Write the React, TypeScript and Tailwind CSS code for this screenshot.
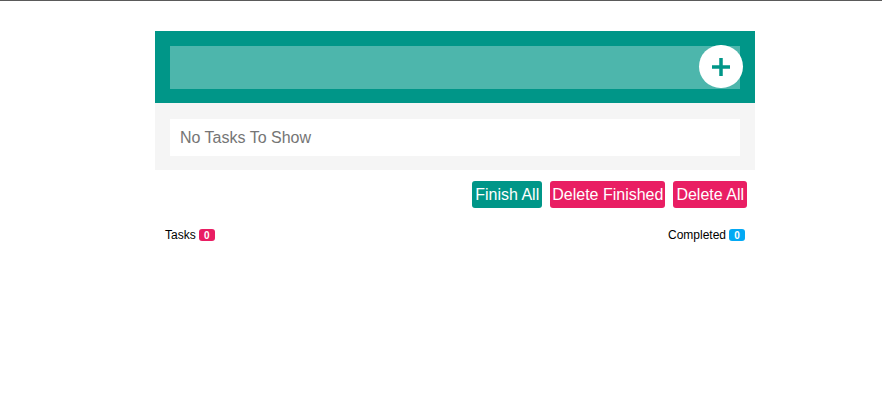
export default function App() {
  return (
    <div className="min-h-screen bg-white border-t border-[#5a5a5a] font-['Liberation_Sans',Arial,sans-serif]">
      <div className="w-[600px] ml-[155px] mt-[30px]">
        {/* header */}
        <div className="bg-[#009688] pl-[15px] pr-[15px] pt-[15px] pb-[14px] flex items-center">
          <div className="flex-1 h-[43px] bg-[#4db6ac] relative">
            <button className="absolute right-[-3px] top-[-1px] w-[44px] h-[43px] rounded-full bg-white flex items-center justify-center">
              <svg width="20" height="20" viewBox="0 0 20 20">
                <rect x="8.25" y="1" width="3.5" height="18" fill="#009688" />
                <rect x="1" y="8.25" width="18" height="3.5" fill="#009688" />
              </svg>
            </button>
          </div>
        </div>

        {/* list */}
        <div className="bg-[#f5f5f5] px-[15px] pt-[16px] pb-[14px]">
          <div className="bg-white h-[37px] px-[10px] flex items-center text-[16px] text-[#757575]">
            No Tasks To Show
          </div>
        </div>

        {/* actions */}
        <div className="flex justify-end gap-[8px] mt-[11px] pr-[8px]">
          <button className="h-[27px] px-[3px] rounded-[3px] bg-[#009688] text-white text-[16px]">Finish All</button>
          <button className="h-[27px] px-[2px] rounded-[3px] bg-[#e91e63] text-white text-[16px]">Delete Finished</button>
          <button className="h-[27px] px-[3px] rounded-[3px] bg-[#e91e63] text-white text-[16px]">Delete All</button>
        </div>

        {/* counts */}
        <div className="flex justify-between items-center mt-[18px] px-[10px] text-[12px] text-black">
          <div className="flex items-center gap-[3px]">
            Tasks
            <span className="bg-[#e91e63] text-white text-[10px] font-bold rounded-[3px] w-[16px] h-[12px] flex items-center justify-center">0</span>
          </div>
          <div className="flex items-center gap-[3px]">
            Completed
            <span className="bg-[#03a9f4] text-white text-[10px] font-bold rounded-[3px] w-[16px] h-[12px] flex items-center justify-center">0</span>
          </div>
        </div>
      </div>
    </div>
  );
}
